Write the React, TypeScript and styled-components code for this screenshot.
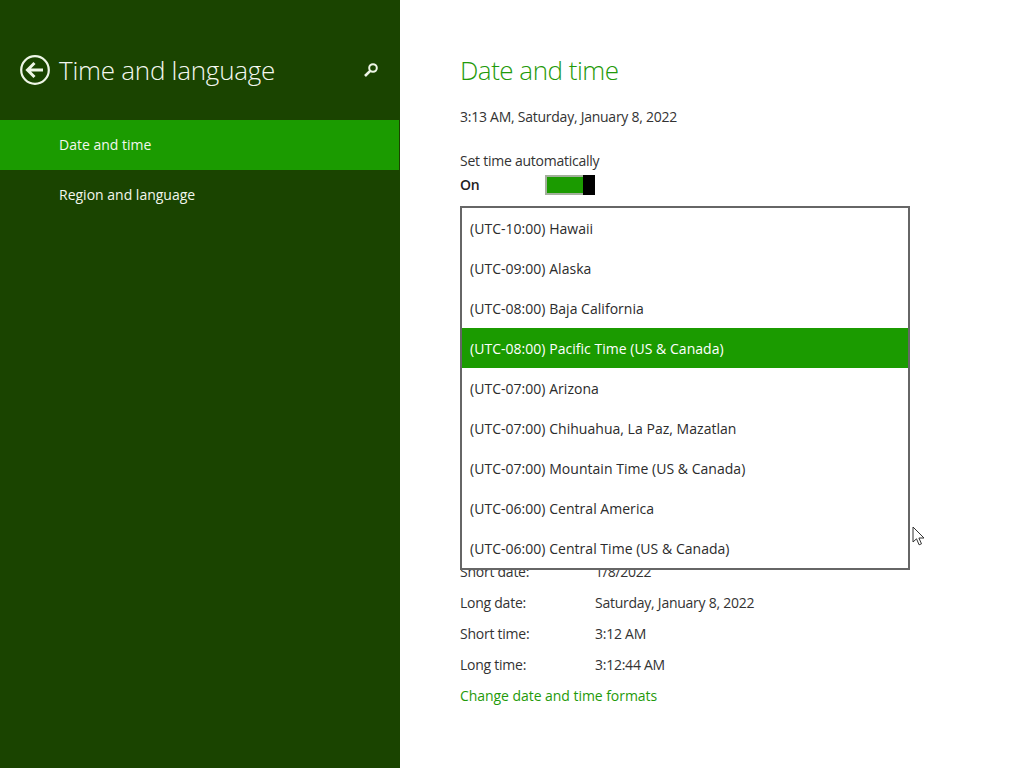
import React from "react";
import styled, { createGlobalStyle } from "styled-components";

const Global = createGlobalStyle`
  html, body { margin: 0; padding: 0; background: #fff; }
  body { font-family: "Open Sans", "Noto Sans", sans-serif; font-size: 14px; }
`;
const Page = styled.div`
  display: flex;
  width: 1024px;
  height: 768px;
  overflow: hidden;
  position: relative;
`;
const Sidebar = styled.aside`
  width: 400px;
  flex: none;
  background: #1a4400;
  color: #fff;
  display: flex;
  flex-direction: column;
`;
const SideHeader = styled.header`
  height: 120px;
  box-sizing: border-box;
  padding: 52px 18px 0 20px;
  display: flex;
  align-items: flex-start;
`;
const BackIcon = styled.svg`
  width: 30px;
  height: 30px;
  flex: none;
  margin-right: 9px;
  margin-top: 3px;
`;
const SideTitle = styled.h1`
  margin: 0;
  font-size: 26px;
  line-height: 36px;
  font-weight: 300;
  flex: 1;
  color: #f4f8f0;
  letter-spacing: -0.25px;
`;
const SearchIcon = styled.svg`
  width: 16px;
  height: 16px;
  margin: 11px 3px 0 0;
`;
const NavItem = styled.div<{ $active?: boolean }>`
  height: 50px;
  width: 399px;
  box-sizing: border-box;
  padding: 0 0 2px 59px;
  display: flex;
  align-items: center;
  letter-spacing: 0;
  color: #f2f7ee;
  background: ${(p) => (p.$active ? "#1b9b00" : "transparent")};
`;
const Main = styled.main`
  flex: 1;
  padding: 52px 0 0 60px;
  color: #333;
  letter-spacing: -0.25px;
`;
const Heading = styled.h2`
  margin: 0;
  font-size: 26px;
  line-height: 36px;
  font-weight: 300;
  letter-spacing: -0.5px;
  color: #1f9a0a;
`;
const Clock = styled.div`
  margin-top: 19px;
  line-height: 20px;
`;
const Label = styled.div`
  margin-top: 24px;
  line-height: 20px;
`;
const ToggleRow = styled.div`
  display: flex;
  align-items: center;
  height: 20px;
  margin-top: 3px;
`;
const ToggleText = styled.span`
  width: 85px;
  font-weight: 600;
  color: #222;
`;
const Toggle = styled.div`
  width: 50px;
  height: 20px;
  margin-top: 2px;
  box-sizing: border-box;
  border: 2px solid #a3b09c;
  border-right: none;
  background: #1b9b00;
  display: flex;
  justify-content: flex-end;
`;
const Thumb = styled.div`
  width: 12px;
  margin: -2px 0;
  background: #000;
`;
const Formats = styled.div`
  margin-top: 362px;
  display: grid;
  grid-template-columns: 135px 1fr;
  grid-auto-rows: 31px;
  align-items: center;
`;
const FormatLink = styled.a`
  display: block;
  margin-top: 6px;
  line-height: 20px;
  letter-spacing: -0.05px;
  color: #1f9a0a;
`;
const Dropdown = styled.div`
  position: absolute;
  left: 460px;
  top: 206px;
  width: 450px;
  height: 364px;
  box-sizing: border-box;
  border: 2px solid #666;
  background: #fff;
`;
const Option = styled.div<{ $selected?: boolean }>`
  height: 40px;
  box-sizing: border-box;
  padding-left: 8px;
  display: flex;
  align-items: center;
  letter-spacing: 0.03px;
  color: ${(p) => (p.$selected ? "#fff" : "#2b2b2b")};
  background: ${(p) => (p.$selected ? "#1b9b00" : "transparent")};
`;
const Cursor = styled.svg`
  position: absolute;
  left: 912px;
  top: 526px;
  width: 13px;
  height: 20px;
`;

const zones = [
  "(UTC-10:00) Hawaii",
  "(UTC-09:00) Alaska",
  "(UTC-08:00) Baja California",
  "(UTC-08:00) Pacific Time (US & Canada)",
  "(UTC-07:00) Arizona",
  "(UTC-07:00) Chihuahua, La Paz, Mazatlan",
  "(UTC-07:00) Mountain Time (US & Canada)",
  "(UTC-06:00) Central America",
  "(UTC-06:00) Central Time (US & Canada)",
];
const formats = [
  ["Short date:", "1/8/2022"],
  ["Long date:", "Saturday, January 8, 2022"],
  ["Short time:", "3:12 AM"],
  ["Long time:", "3:12:44 AM"],
];

export default function App() {
  return (
    <Page>
      <Global />
      <Sidebar>
        <SideHeader>
          <BackIcon viewBox="0 0 30 30" fill="none" stroke="#eef6e6">
            <circle cx="15" cy="15" r="13.8" strokeWidth="2.2" />
            <path d="M23 15H9M14.5 8L7.5 15l7 7" strokeWidth="3" />
          </BackIcon>
          <SideTitle>Time and language</SideTitle>
          <SearchIcon viewBox="0 0 16 16" fill="none" stroke="#eef6e6">
            <circle cx="10" cy="5" r="3.8" strokeWidth="2" />
            <path d="M7.2 7.8L2 13" strokeWidth="2.6" />
          </SearchIcon>
        </SideHeader>
        <NavItem $active>Date and time</NavItem>
        <NavItem>Region and language</NavItem>
      </Sidebar>
      <Main>
        <Heading>Date and time</Heading>
        <Clock>3:13 AM, Saturday, January 8, 2022</Clock>
        <Label>Set time automatically</Label>
        <ToggleRow>
          <ToggleText>On</ToggleText>
          <Toggle>
            <Thumb />
          </Toggle>
        </ToggleRow>
        <Formats>
          {formats.map(([k, v]) => (
            <React.Fragment key={k}>
              <span>{k}</span>
              <span>{v}</span>
            </React.Fragment>
          ))}
        </Formats>
        <FormatLink>Change date and time formats</FormatLink>
      </Main>
      <Dropdown>
        {zones.map((z, i) => (
          <Option key={z} $selected={i === 3}>
            {z}
          </Option>
        ))}
      </Dropdown>
      <Cursor viewBox="0 0 13 20">
        <path d="M1 1v15l3.5-3.2 2.6 6 2.4-1-2.6-5.8H12z" fill="#fff" stroke="#333" strokeWidth="1" />
      </Cursor>
    </Page>
  );
}
